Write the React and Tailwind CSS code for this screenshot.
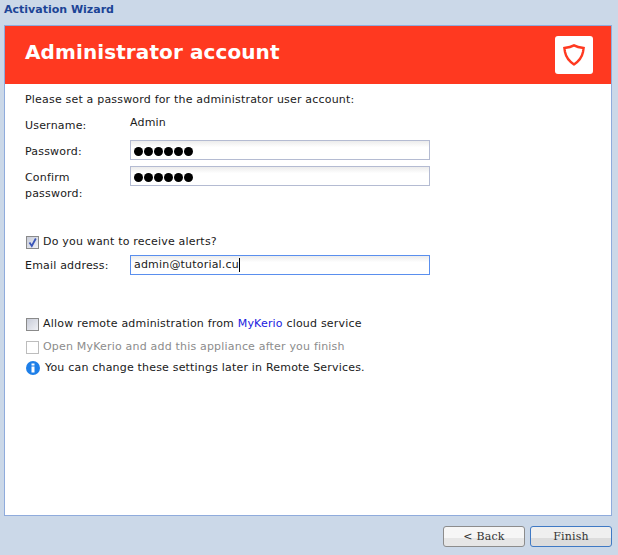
import React from 'react';

const Dots = () => (
    <div className="flex gap-[1px] pt-[2px]">
        {[0, 1, 2, 3, 4, 5].map((i) => (
            <span key={i} className="w-[9px] h-[9px] rounded-full bg-black" />
        ))}
    </div>
);

const CheckBox = ({ checked, disabled }) => (
    <span className={`ml-[1px] w-[13px] h-[13px] border flex items-center justify-center shrink-0 ${disabled ? 'border-[#bdbdbd] bg-white' : 'border-[#8a8a8a] bg-gradient-to-br from-[#c8ccd8] to-[#f0f1f5]'}`}>
        {checked && (
            <svg width="11" height="11" viewBox="0 0 11 11">
                <path d="M2.5 5.5 L4.8 9 L8.8 1.5" fill="none" stroke="#3a55b8" strokeWidth="1.8" />
            </svg>
        )}
    </span>
);

const PasswordField = () => (
    <div className="w-[300px] h-[20px] border border-[#b4bbd2] bg-gradient-to-b from-[#ececec] to-white to-[35%] flex items-center pl-[3px]">
        <Dots />
    </div>
);

export default function App() {
    return (
        <div className="w-[618px] h-[555px] bg-[#cbd8e8] font-['DejaVu_Sans',sans-serif] text-[11px] tracking-[0.19px] text-[#1a1a1a] flex flex-col">
            <div className="h-[25px] pl-[4px] pt-[3px] font-bold tracking-normal text-[#1c4496] leading-[14px]">Activation Wizard</div>

            <div className="mx-[4px] w-[608px] h-[491px] border border-[#8fabdc] bg-white flex flex-col">
                <div className="h-[58px] bg-[#ff3920] flex items-center justify-between pl-[20px] pr-[18px] shrink-0">
                    <span className="text-[20px] font-bold tracking-[0.1px] text-white leading-none pb-[6px]">Administrator account</span>
                    <div className="w-[38px] h-[38px] bg-white rounded-[3px] flex items-center justify-center">
                        <svg width="24" height="24" viewBox="0 0 24 24">
                            <path d="M2.4 5 C6 4.6 9.5 3.8 12 2.4 C14.5 3.8 18 4.6 21.6 5 L21 9 C20 14 16.5 18.5 12 21.4 C7.5 18.5 4 14 3 9 Z" fill="none" stroke="#ff3920" strokeWidth="2.4" />
                        </svg>
                    </div>
                </div>

                <div className="pl-[20px] flex flex-col">
                    <div className="mt-[9px] leading-[14px]">Please set a password for the administrator user account:</div>

                    <div className="mt-[9px] flex h-[18px]">
                        <span className="w-[105px] pt-[3px] leading-[14px]">Username:</span>
                        <span className="leading-[14px]">Admin</span>
                    </div>
                    <div className="mt-[6px] flex items-center h-[20px]">
                        <span className="w-[105px] pt-[4px]">Password:</span>
                        <PasswordField />
                    </div>
                    <div className="mt-[6px] flex">
                        <span className="w-[105px] leading-[16px] pt-[4px]">Confirm<br />password:</span>
                        <PasswordField />
                    </div>

                    <label className="mt-[33px] flex items-center gap-[4px] h-[14px]">
                        <CheckBox checked />
                        <span>Do you want to receive alerts?</span>
                    </label>
                    <div className="mt-[6px] flex items-center h-[20px]">
                        <span className="w-[105px] pt-[2px]">Email address:</span>
                        <div className="w-[300px] h-[20px] border border-[#5a8fee] bg-gradient-to-b from-[#ececec] to-white to-[35%] flex items-center pl-[3px]">
                            <span>admin@tutorial.cu</span>
                            <span className="w-px h-[14px] bg-black" />
                        </div>
                    </div>

                    <label className="mt-[42px] flex items-center gap-[4px] h-[14px]">
                        <CheckBox />
                        <span>Allow remote administration from <span className="text-[#1a1ae0]">MyKerio</span> cloud service</span>
                    </label>
                    <label className="mt-[9px] flex items-center gap-[4px] h-[14px] text-[#8c8c8c]">
                        <CheckBox disabled />
                        <span>Open MyKerio and add this appliance after you finish</span>
                    </label>
                    <div className="mt-[7px] ml-[1px] flex items-center gap-[5px] h-[14px]">
                        <svg width="14" height="14" viewBox="0 0 14 14">
                            <circle cx="7" cy="7" r="7" fill="#1e7fe8" />
                            <rect x="5.5" y="2.5" width="3" height="2" fill="white" />
                            <rect x="5.5" y="5.5" width="3" height="6" fill="white" />
                        </svg>
                        <span>You can change these settings later in Remote Services.</span>
                    </div>
                </div>
            </div>

            <div className="mt-[10px] pr-[6px] flex justify-end gap-[5px] font-['DejaVu_Serif',serif] text-[#333]">
                <button className="w-[82px] h-[21px] rounded-[3px] border border-[#8c8c8c] bg-gradient-to-b from-[#f6f6f6] from-57% to-[#e6e6e6] to-57% leading-none">&lt; Back</button>
                <button className="w-[82px] h-[21px] rounded-[3px] border border-[#3f79c4] bg-gradient-to-b from-[#efefef] from-57% to-[#dcdcdc] to-57% leading-none">Finish</button>
            </div>
        </div>
    );
}
